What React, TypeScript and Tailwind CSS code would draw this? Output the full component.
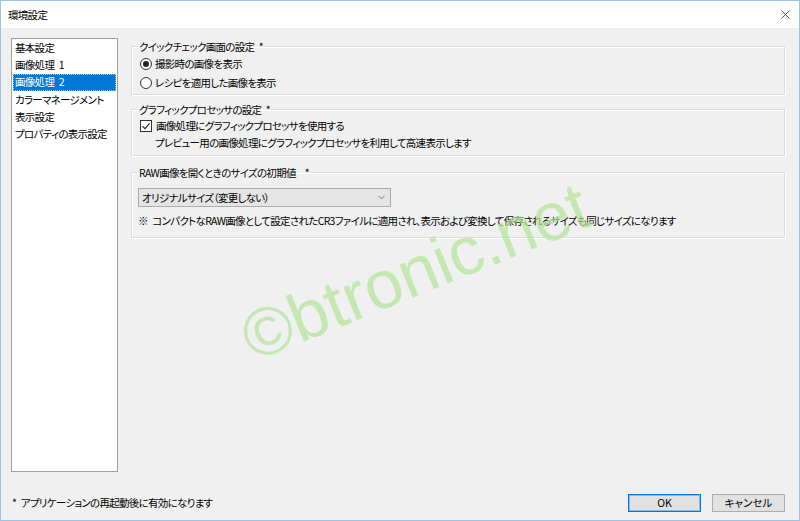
import { ChevronDown, X } from "lucide-react";

const FONT = { fontFamily: '"Noto Sans CJK JP", "Noto Sans", sans-serif', fontFeatureSettings: '"palt"' };

const MENU = ["基本設定", "画像処理\u20021", "画像処理\u20022", "カラーマネージメント", "表示設定", "プロパティの表示設定"];

function Group({ title, children, className = "" }: { title: string; children: React.ReactNode; className?: string }) {
  return (
    <fieldset
      className={`border border-[#dcdcdc] shadow-[inset_1px_1px_0_#ffffff,1px_1px_0_#ffffff] px-[6px] ${className}`}
    >
      <legend className="px-[1px] leading-[13px]">{title}</legend>
      {children}
    </fieldset>
  );
}

function Radio({ checked, label }: { checked?: boolean; label: string }) {
  return (
    <div className="flex items-center h-[19px] pl-[2px]">
      <span className="w-[12px] h-[12px] rounded-full border border-[#333333] bg-white flex items-center justify-center">
        {checked && <span className="w-[6px] h-[6px] rounded-full bg-[#222222]" />}
      </span>
      <span className="ml-[3px]">{label}</span>
    </div>
  );
}

export default function App() {
  return (
    <div
      className="relative w-[800px] h-[521px] flex flex-col bg-[#f0f0f0] border border-[#9ec2e6] text-[10.5px] tracking-[-0.7px] text-black overflow-hidden"
      style={FONT}
    >
      <div className="h-[27px] bg-white flex items-center justify-between pl-[7px] pr-[6px] shrink-0">
        <span>環境設定</span>
        <X className="w-[15px] h-[15px] text-[#222222]" strokeWidth={1.2} />
      </div>

      <div className="flex-1 flex pt-[10px] pl-[10px] pr-[14px]">
        <div className="w-[107px] h-[434px] bg-white border border-[#a0a0a0] px-[1px] shrink-0">
          {MENU.map((m, i) => (
            <div
              key={m}
              className={`h-[17.3px] flex items-center pl-[2px] ${
                i === 2 ? "bg-[#0078d7] text-white outline outline-1 outline-dotted outline-[#9ec8f0] -outline-offset-1" : ""
              }`}
            >
              {m}
            </div>
          ))}
        </div>

        <div className="flex-1 ml-[13px] flex flex-col">
          <Group title={"クイックチェック画面の設定\u2002*"} className="mt-[2px] pt-[1px] pb-[2px]">
            <Radio checked label="撮影時の画像を表示" />
            <Radio label="レシピを適用した画像を表示" />
          </Group>

          <Group title={"グラフィックプロセッサの設定\u2002*"} className="mt-[8px] pt-[1px] pb-[4px]">
            <div className="flex items-center h-[17px] pl-[2px]">
              <span className="w-[12px] h-[12px] border border-[#333333] bg-white flex items-center justify-center">
                <svg viewBox="0 0 10 10" className="w-[10px] h-[10px]">
                  <path d="M1.5 5.2 L4 7.6 L8.6 2.4" fill="none" stroke="#222222" strokeWidth="1.1" />
                </svg>
              </span>
              <span className="ml-[4px]">画像処理にグラフィックプロセッサを使用する</span>
            </div>
            <div className="h-[17px] flex items-center pl-[17px]">プレビュー用の画像処理にグラフィックプロセッサを利用して高速表示します</div>
          </Group>

          <Group title={"RAW画像を開くときのサイズの初期値\u2002\u2002*"} className="mt-[10px] pb-[8px]">
            <div className="mt-[9px] w-[253px] h-[19px] bg-[#e5e5e5] border border-[#adadad] flex items-center justify-between pl-[3px] pr-[3px]">
              <span>オリジナルサイズ（変更しない）</span>
              <ChevronDown className="w-[11px] h-[11px] text-[#444444]" strokeWidth={1.4} />
            </div>
            <div className="h-[17px] mt-[5px] flex items-center">
              {"※\u2002コンパクトなRAW画像として設定されたCR3ファイルに適用され、表示および変換して保存されるサイズも同じサイズになります"}
            </div>
          </Group>
        </div>
      </div>

      <div className="h-[48px] shrink-0 flex items-center justify-between pl-[11px] pr-[14px] pt-[13px]">
        <span>{"*\u2002アプリケーションの再起動後に有効になります"}</span>
        <div className="flex gap-[11px] tracking-normal">
          <button className="w-[73px] h-[18px] bg-[#e1e1e1] border border-[#0078d7] shadow-[inset_0_0_0_1px_#8cbbe8] flex items-center justify-center">
            OK
          </button>
          <button className="w-[73px] h-[18px] bg-[#e1e1e1] border border-[#adadad] flex items-center justify-center">
            キャンセル
          </button>
        </div>
      </div>

      <div
        className="absolute left-[230px] top-[236px] text-[68px] leading-none tracking-normal text-[#b4e59a] opacity-70 -rotate-[22deg] pointer-events-none whitespace-nowrap"
        style={{ fontFamily: '"Liberation Sans", Arial, sans-serif' }}
      >
        ©btronic.net
      </div>
    </div>
  );
}
